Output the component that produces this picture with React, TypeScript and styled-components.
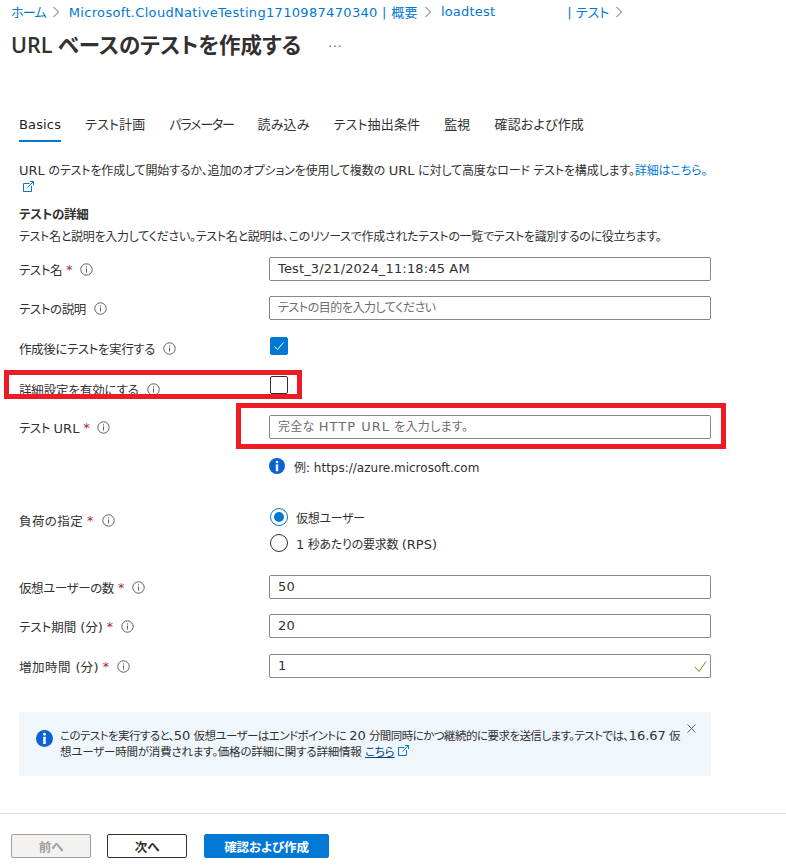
import * as React from 'react';
import styled, { createGlobalStyle } from 'styled-components';

const GlobalStyle = createGlobalStyle`
	html, body {
		margin: 0;
		padding: 0;
		background: #ffffff;
	}
	body {
		font-family: "DejaVu Sans", "Noto Sans CJK JP", sans-serif;
		font-size: 12px;
		letter-spacing: -0.28px;
		color: #323130;
		font-feature-settings: "palt";
	}
`;

const Page = styled.div`
	width: 786px;
	height: 868px;
	overflow: hidden;
`;

// latin runs sit a little larger than the kana around them
const Latin = styled.span<{ $spacing?: number }>`
	font-size: 13px;
	letter-spacing: ${p => p.$spacing || 0}px;
`;

const Breadcrumb = styled.nav`
	display: flex;
	align-items: center;
	height: 23px;
	padding-left: 11px;
	color: #0078d4;
	font-size: 13px;
	letter-spacing: 0;
`;

const Crumb = styled.a<{ $gap?: number; $spacing?: number }>`
	margin-left: ${p => p.$gap || 0}px;
	white-space: nowrap;
	letter-spacing: ${p => p.$spacing || 0}px;
`;

const Chevron = styled.svg`
	width: 8px;
	height: 12px;
	margin: 0 9px 0 6px;
	fill: none;
	stroke: #605e5c;
	stroke-width: 1;
`;

const TitleRow = styled.header`
	display: flex;
	align-items: center;
	height: 40px;
	padding-left: 11px;
`;

const Title = styled.h1`
	margin: 0;
	font-family: "Open Sans", "Noto Sans CJK JP", sans-serif;
	font-size: 21.5px;
	font-weight: 600;
	letter-spacing: 0;
	color: #323130;
	white-space: nowrap;
`;

const More = styled.span`
	margin-left: 27px;
	font-size: 12px;
	letter-spacing: 1px;
	color: #605e5c;
`;

const Tabs = styled.div`
	display: flex;
	gap: 24px;
	height: 32px;
	margin: 47px 0 0 19px;
`;

const Tab = styled.div<{ $active?: boolean; $tight?: boolean }>`
	height: 29px;
	padding-top: 1px;
	line-height: 27px;
	font-size: 13px;
	letter-spacing: ${p => (p.$tight ? '-1.2px' : '0.15px')};
	white-space: nowrap;
	font-weight: 400;
	color: ${p => (p.$active ? '#201f1e' : '#323130')};
	border-bottom: 2px solid ${p => (p.$active ? '#0078d4' : 'transparent')};
`;

const Body = styled.main`
	padding: 20px 0 0 19px;
`;

const Intro = styled.p`
	width: 700px;
	margin: 0;
	line-height: 17px;
	letter-spacing: -0.15px;
	a {
		color: #0078d4;
	}
`;

const IntroIcon = styled.span`
	margin-left: 4px;
`;

const SectionTitle = styled.h2`
	margin: 9px 0 0;
	font-size: 12.5px;
	font-weight: 700;
	line-height: 18px;
`;

const SectionText = styled.p`
	margin: 4px 0 0;
	line-height: 18px;
	white-space: nowrap;
`;

const Row = styled.div<{ $top: number }>`
	position: relative;
	display: grid;
	grid-template-columns: 250px 442px;
	align-items: center;
	min-height: 24px;
	margin-top: ${p => p.$top}px;
`;

const Label = styled.label<{ $shift?: number; $start?: boolean; $spacing?: number; $pull?: number }>`
	display: flex;
	align-items: center;
	align-self: ${p => (p.$start ? 'start' : 'center')};
	white-space: nowrap;
	font-size: 12.5px;
	letter-spacing: ${p => (p.$spacing === undefined ? -0.4 : p.$spacing)}px;
	padding-top: ${p => p.$shift || 0}px;
	margin-bottom: ${p => -(p.$pull || 0)}px;
`;

const Required = styled.span`
	margin-left: 4px;
	color: #a4262c;
`;

const Hint = styled.svg`
	width: 13px;
	height: 13px;
	margin-left: 8px;
	fill: none;
	stroke: #605e5c;
`;

const InputBox = styled.div<{ $placeholder?: boolean; $spacing?: number }>`
	position: relative;
	box-sizing: border-box;
	height: 24px;
	padding: 0 8px;
	line-height: 22px;
	font-size: ${p => (p.$placeholder ? 12 : 13)}px;
	letter-spacing: ${p => (p.$spacing !== undefined ? p.$spacing : p.$placeholder ? -0.45 : 0.15)}px;
	border: 1px solid #8a8886;
	border-radius: 2px;
	background: #ffffff;
	color: ${p => (p.$placeholder ? '#6e6c6a' : '#323130')};
`;

const ValidMark = styled.svg`
	position: absolute;
	right: 3px;
	top: 5px;
	width: 13px;
	height: 13px;
	fill: none;
	stroke: #57a300;
`;

const Check = styled.div<{ $on?: boolean }>`
	box-sizing: border-box;
	display: flex;
	align-items: center;
	justify-content: center;
	width: 18px;
	height: 18px;
	margin-left: 1px;
	border-radius: 2px;
	border: 1px solid ${p => (p.$on ? '#0078d4' : '#323130')};
	background: ${p => (p.$on ? '#0078d4' : '#ffffff')};
`;

const CheckGlyph = styled.svg`
	width: 12px;
	height: 12px;
	fill: none;
	stroke: #ffffff;
`;

const Outline = styled.div<{ $left: number; $top: number; $width: number; $height: number }>`
	position: absolute;
	box-sizing: border-box;
	left: ${p => p.$left}px;
	top: ${p => p.$top}px;
	width: ${p => p.$width}px;
	height: ${p => p.$height}px;
	border: 5px solid #ed1c24;
	pointer-events: none;
`;

const ExampleLine = styled.div`
	display: flex;
	align-items: center;
	gap: 9px;
	font-size: 12px;
	letter-spacing: 0;
`;

const RadioGroup = styled.div`
	display: flex;
	flex-direction: column;
	gap: 8px;
`;

const RadioRow = styled.div`
	display: flex;
	align-items: center;
	gap: 8px;
	height: 18px;
	margin-left: 1px;
`;

const RadioDot = styled.span<{ $on?: boolean }>`
	box-sizing: border-box;
	display: flex;
	align-items: center;
	justify-content: center;
	width: 18px;
	height: 18px;
	border-radius: 50%;
	border: 1px solid ${p => (p.$on ? '#0078d4' : '#323130')};
	&::after {
		content: '';
		display: ${p => (p.$on ? 'block' : 'none')};
		width: 10px;
		height: 10px;
		border-radius: 50%;
		background: #0078d4;
	}
`;

const Notice = styled.section`
	position: relative;
	box-sizing: border-box;
	display: flex;
	gap: 7px;
	width: 692px;
	height: 64px;
	margin: 34px 0 0;
	padding: 16px 26px 0 17px;
	background: #eff6fc;
	font-size: 11.5px;
	letter-spacing: -0.55px;
	line-height: 16px;
	a {
		color: #004578;
		text-decoration: underline;
	}
`;

const NoticeIcon = styled.span`
	margin-top: 2px;
`;

const NoticeText = styled.p`
	margin: 0;
	width: 630px;
	white-space: nowrap;
`;

const NoticeSecondLine = styled.span`
	letter-spacing: -0.2px;
`;

const Close = styled.svg`
	position: absolute;
	right: 15px;
	top: 12px;
	width: 9px;
	height: 9px;
	fill: none;
	stroke: #605e5c;
`;

const Footer = styled.footer`
	display: flex;
	gap: 16px;
	margin-top: 37px;
	padding: 20px 0 0 11px;
	border-top: 1px solid #e1dfdd;
`;

const Button = styled.button<{ $kind: 'disabled' | 'default' | 'primary'; $width: number; $left?: number }>`
	box-sizing: border-box;
	width: ${p => p.$width}px;
	height: 24px;
	padding: 0;
	margin-left: ${p => p.$left || 0}px;
	border-radius: 2px;
	font-family: inherit;
	font-feature-settings: inherit;
	font-size: 12.5px;
	letter-spacing: -0.1px;
	font-weight: 700;
	border: 1px solid ${p => (p.$kind === 'disabled' ? '#a19f9d' : p.$kind === 'primary' ? '#0078d4' : '#323130')};
	background: ${p => (p.$kind === 'disabled' ? '#f3f2f1' : p.$kind === 'primary' ? '#0078d4' : '#ffffff')};
	color: ${p => (p.$kind === 'disabled' ? '#a19f9d' : p.$kind === 'primary' ? '#ffffff' : '#323130')};
`;

const InfoFilled = ({ size }: { size: number }) => (
	<svg width={size} height={size} viewBox="0 0 16 16" style={{ flex: 'none', display: 'block' }}>
		<circle cx="8" cy="8" r="8" fill="#0b62d6" />
		<circle cx="8" cy="4" r="1.3" fill="#ffffff" />
		<rect x="6.8" y="6.4" width="2.4" height="6.8" fill="#ffffff" />
	</svg>
);

const ExternalLink = () => (
	<svg width="11" height="11" viewBox="0 0 11 11" fill="none" stroke="#0078d4">
		<path d="M6.5 2.5H.5v8h8V5" />
		<path d="M4.5 6.5l6-6M7 .5h3.5V4" />
	</svg>
);

const InfoHint = () => (
	<Hint viewBox="0 0 13 13">
		<circle cx="6.5" cy="6.5" r="5.7" />
		<path d="M6.5 5.5v4M6.5 3.4v1.1" />
	</Hint>
);

const Sep = () => (
	<Chevron viewBox="0 0 8 12">
		<path d="M1.5 1l5 5-5 5" />
	</Chevron>
);

export default function App() {
	return (
		<Page>
			<GlobalStyle />
			<Breadcrumb>
				<Crumb $spacing={-0.8}>ホーム</Crumb>
				<Sep />
				<Crumb $spacing={0.32}>Microsoft.CloudNativeTesting1710987470340 | 概要</Crumb>
				<Sep />
				<Crumb $spacing={0.2}>loadtest</Crumb>
				<Crumb $gap={72}>| テスト</Crumb>
				<Sep />
			</Breadcrumb>
			<TitleRow>
				<Title>URL ベースのテストを作成する</Title>
				<More>...</More>
			</TitleRow>
			<Tabs>
				<Tab $active>Basics</Tab>
				<Tab>テスト計画</Tab>
				<Tab $tight>パラメーター</Tab>
				<Tab>読み込み</Tab>
				<Tab>テスト抽出条件</Tab>
				<Tab>監視</Tab>
				<Tab>確認および作成</Tab>
			</Tabs>
			<Body>
				<Intro>
					<Latin>URL</Latin> のテストを作成して開始するか、追加のオプションを使用して複数の <Latin>URL</Latin> に対して高度なロード テストを構成します。<a>詳細はこちら。</a><br />
					<IntroIcon><ExternalLink /></IntroIcon>
				</Intro>
				<SectionTitle>テストの詳細</SectionTitle>
				<SectionText>テスト名と説明を入力してください。テスト名と説明は、このリソースで作成されたテストの一覧でテストを識別するのに役立ちます。</SectionText>

				<Row $top={11}>
					<Label>テスト名<Required>*</Required><InfoHint /></Label>
					<InputBox>Test_3/21/2024_11:18:45 AM</InputBox>
				</Row>
				<Row $top={15}>
					<Label>テストの説明<InfoHint /></Label>
					<InputBox $placeholder>テストの目的を入力してください</InputBox>
				</Row>
				<Row $top={14}>
					<Label $shift={5}>作成後にテストを実行する<InfoHint /></Label>
					<Check $on>
						<CheckGlyph viewBox="0 0 12 12"><path d="M1.5 6.5l3 3 6-7" /></CheckGlyph>
					</Check>
				</Row>
				<Row $top={15}>
					<Label $shift={7} $pull={2} $spacing={-0.15}>詳細設定を有効にする<InfoHint /></Label>
					<Check />
					<Outline $left={-15} $top={-3} $width={298} $height={29} />
				</Row>
				<Row $top={18}>
					<Label><span>テスト <Latin>URL</Latin></span><Required>*</Required><InfoHint /></Label>
					<InputBox $placeholder $spacing={0.3}>完全な <Latin $spacing={1}>HTTP URL</Latin> を入力します。</InputBox>
					<Outline $left={217} $top={-12} $width={490} $height={46} />
				</Row>
				<Row $top={15}>
					<span />
					<ExampleLine><InfoFilled size={16} />例: https://azure.microsoft.com</ExampleLine>
				</Row>
				<Row $top={30}>
					<Label $start $shift={3} $spacing={0.4}>負荷の指定<Required>*</Required><InfoHint /></Label>
					<RadioGroup>
						<RadioRow><RadioDot $on />仮想ユーザー</RadioRow>
						<RadioRow><RadioDot /><span><Latin>1</Latin> 秒あたりの要求数 <Latin>(RPS)</Latin></span></RadioRow>
					</RadioGroup>
				</Row>
				<Row $top={23}>
					<Label>仮想ユーザーの数<Required>*</Required><InfoHint /></Label>
					<InputBox>50</InputBox>
				</Row>
				<Row $top={15}>
					<Label $spacing={0}><span>テスト期間 <Latin>(</Latin>分<Latin>)</Latin></span><Required>*</Required><InfoHint /></Label>
					<InputBox>20</InputBox>
				</Row>
				<Row $top={16}>
					<Label $spacing={0.5}><span>増加時間 <Latin>(</Latin>分<Latin>)</Latin></span><Required>*</Required><InfoHint /></Label>
					<InputBox>
						1
						<ValidMark viewBox="0 0 13 13"><path d="M1 7l4 4.5L12 1.5" /></ValidMark>
					</InputBox>
				</Row>
				<Notice>
					<NoticeIcon><InfoFilled size={17} /></NoticeIcon>
					<NoticeText>
						このテストを実行すると、<Latin>50</Latin> 仮想ユーザーはエンドポイントに <Latin>20</Latin> 分間同時にかつ継続的に要求を送信します。テストでは、<Latin>16.67</Latin> 仮<br />
						<NoticeSecondLine>想ユーザー時間が消費されます。価格の詳細に関する詳細情報 <a>こちら</a> <ExternalLink /></NoticeSecondLine>
					</NoticeText>
					<Close viewBox="0 0 9 9"><path d="M.5.5l8 8M8.5.5l-8 8" /></Close>
				</Notice>
			</Body>
			<Footer>
				<Button $kind="disabled" $width={80}>前へ</Button>
				<Button $kind="default" $width={80}>次へ</Button>
				<Button $kind="primary" $width={125} $left={1}>確認および作成</Button>
			</Footer>
		</Page>
	);
}
